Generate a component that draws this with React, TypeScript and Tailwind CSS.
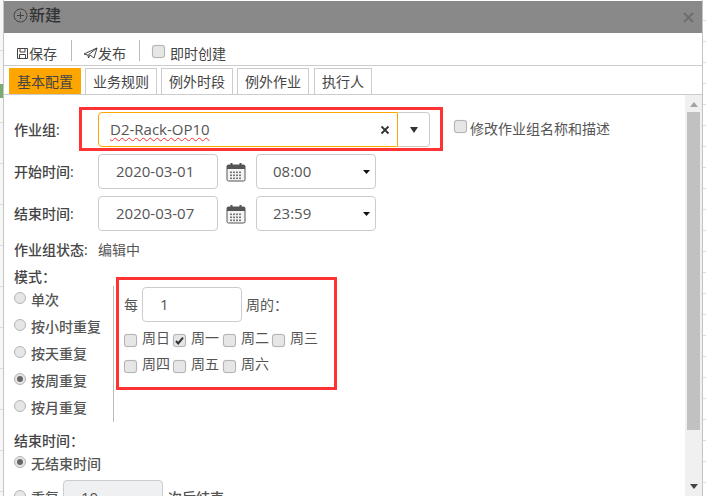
import React from "react";

const FONT = "font-['Open_Sans','Noto_Sans_CJK_SC',sans-serif]";

function Box({ checked }: { checked?: boolean }) {
  return (
    <span className="w-[13px] h-[13px] shrink-0 rounded-[3px] border border-[#b4b4b4] bg-[#e6e6e6] shadow-[0_0_1px_#ccc] flex items-center justify-center">
      {checked && (
        <svg width="9" height="9" viewBox="0 0 9 9">
          <path d="M1 5l2.200 2.400L8 1.600" fill="none" stroke="#333" strokeWidth="2" />
        </svg>
      )}
    </span>
  );
}

function Radio({ checked }: { checked?: boolean }) {
  return (
    <span className="w-[12px] h-[12px] -mt-[3px] shrink-0 rounded-full border border-[#b4b4b4] bg-[#e6e6e6] flex items-center justify-center">
      {checked && <span className="w-[6px] h-[6px] rounded-full bg-[#666]" />}
    </span>
  );
}

function Field({ w, children, className = "" }: { w: string; children: React.ReactNode; className?: string }) {
  return (
    <div className={`${w} h-[35px] shrink-0 border border-[#ccc] rounded-[4px] flex items-center text-[15px] text-[#555] ${className}`}>
      {children}
    </div>
  );
}

function Calendar() {
  return (
    <svg width="20" height="20" viewBox="0 0 20 20" className="shrink-0">
      <rect x="1" y="3" width="18" height="16" rx="1.500" fill="#f4f4f4" stroke="#555" strokeWidth="1" />
      <rect x="1" y="3" width="18" height="4" fill="#555" />
      <rect x="4.500" y="1" width="2" height="4" fill="#555" />
      <rect x="13.500" y="1" width="2" height="4" fill="#555" />
      {[4, 7, 10, 13].map((x) =>
        [9.5, 12.5, 15.5].map((y) => <rect key={`${x}-${y}`} x={x} y={y} width="2" height="1.600" fill="#777" />)
      )}
    </svg>
  );
}

function Caret({ big }: { big?: boolean }) {
  return big ? (
    <svg width="8" height="6" viewBox="0 0 8 6"><path d="M0 0h8L4 6z" fill="#333" /></svg>
  ) : (
    <svg width="7" height="4" viewBox="0 0 7 4"><path d="M0 0h7L3.500 4z" fill="#111" /></svg>
  );
}

function TimeRow({ label, date, time }: { label: string; date: string; time: string }) {
  return (
    <div className="flex items-center h-[35px] mb-[7px]">
      <span className="w-[84px] text-[14px] font-medium text-[#444]">{label}</span>
      <Field w="w-[120px]" className="pl-[17px]">{date}</Field>
      <span className="w-[38px] flex justify-center pr-[3px]"><Calendar /></span>
      <Field w="w-[120px]" className="pl-[16px] justify-between pr-[5px]">
        {time}
        <Caret />
      </Field>
    </div>
  );
}

function Mode({ label, checked }: { label: string; checked?: boolean }) {
  return (
    <div className="flex items-center gap-[5px] h-[27px] text-[14px] font-medium text-[#555]">
      <Radio checked={checked} />
      {label}
    </div>
  );
}

function Day({ label, checked, w }: { label: string; checked?: boolean; w: string }) {
  return (
    <div className={`flex items-center gap-[5px] ${w} text-[14px] text-[#555]`}>
      <span className="pt-[3px]"><Box checked={checked} /></span>
      <span className="-mt-[3px]">{label}</span>
    </div>
  );
}

export default function App() {
  return (
    <div className={`w-[706px] h-[496px] overflow-hidden bg-white flex ${FONT}`}>
      <div className="w-[3px] shrink-0 flex flex-col bg-[#f7f7f7]">
        <div className="h-[84px] shrink-0 bg-[linear-gradient(#f7f7f7_50px,#ddd_50px,#ddd_51px,#f7f7f7_51px)]" />
        <div className="h-[14px] shrink-0 bg-[#79ad6f]" />
        <div className="flex-1 bg-[repeating-linear-gradient(#f7f7f7_0,#f7f7f7_24px,#ddd_24px,#ddd_25px,#f7f7f7_25px,#f7f7f7_41px)]" />
      </div>
      <div className="w-[700px] shrink-0 h-full flex flex-col border-x border-[#c4c4c4]">
        <header className="h-[32px] shrink-0 mt-px bg-[#898989] flex items-center justify-between pl-[9px] pr-[8px] pb-[4px]">
          <div className="flex items-center text-[16px] font-medium text-[#333]">
            <svg width="15" height="15" viewBox="0 0 15 15" className="mr-px">
              <circle cx="7.500" cy="7.500" r="6.500" fill="none" stroke="#444" />
              <path d="M7.500 4v7M4 7.500h7" stroke="#444" />
            </svg>
            新建
          </div>
          <svg width="11" height="11" viewBox="0 0 11 11" className="mt-[4px]">
            <path d="M1 1l9 9M10 1l-9 9" stroke="#6e6e6e" strokeWidth="2" />
          </svg>
        </header>

        <div className="h-[33px] shrink-0 border-b border-[#ccc] flex items-center pl-[12px] text-[14px] text-[#444]">
          <span className="flex items-center pt-[9px]">
            <svg width="13" height="13" viewBox="0 0 13 13"><path d="M1.500 1.500h10v10h-10zM4 1.500v3.500h5v-3.500M3.500 11.500v-4h6v4" fill="none" stroke="#444" /></svg>
            保存
          </span>
          <span className="w-px h-[21px] mt-[3px] bg-[#bbb] ml-[14px] mr-[11px]" />
          <span className="flex items-center pt-[9px]">
            <svg width="15" height="13" viewBox="0 0 15 13"><path d="M1 7L14 1l-3 10-4-3-1.500 3L5 8.200zM5 8.200L14 1" fill="none" stroke="#444" /></svg>
            发布
          </span>
          <span className="w-px h-[21px] mt-[3px] bg-[#bbb] ml-[13px] mr-[12px]" />
          <span className="flex items-center gap-[5px] pt-[9px]">
            <span className="-mt-[4px]"><Box /></span>
            即时创建
          </span>
        </div>

        <nav className="h-[29px] shrink-0 border-b border-[#ccc] flex items-end pl-[5px] gap-[4px] text-[14px] text-[#444]">
          <span className="h-[26px] w-[72px] bg-[#ffa500] flex items-center justify-center">基本配置</span>
          {["业务规则", "例外时段", "例外作业"].map((t) => (
            <span key={t} className="h-[26px] w-[72px] border border-b-0 border-[#ccc] flex items-center justify-center">{t}</span>
          ))}
          <span className="h-[26px] w-[58px] ml-px border border-b-0 border-[#ccc] flex items-center justify-center">执行人</span>
        </nav>

        <div className="flex-1 flex min-h-0">
          <main className="flex-1 min-w-0 pl-[10px] pt-[17px] overflow-hidden">
            <div className="flex items-center h-[35px] mb-[7px]">
              <span className="w-[84px] text-[14px] font-medium text-[#444]">作业组:</span>
              <div className="relative flex w-[332px] h-[35px] shrink-0">
                <div className="flex-1 border border-[#ffa500] rounded-l-[4px] flex items-center justify-between pl-[11px] pr-[7px] text-[15px] text-[#555]">
                  <span className="underline decoration-wavy decoration-[#e33] decoration-1 underline-offset-2">D2-Rack-OP10</span>
                  <svg width="10" height="10" viewBox="0 0 10 10"><path d="M1.500 1.500l7 7M8.500 1.500l-7 7" stroke="#333" strokeWidth="1.800" /></svg>
                </div>
                <div className="w-[32px] border border-l-0 border-[#ccc] rounded-r-[4px] flex items-center justify-center"><Caret big /></div>
                <div className="absolute -left-[19px] -top-[5px] w-[364px] h-[44px] border-[3px] border-[#ff3333] pointer-events-none" />
              </div>
              <span className="ml-[24px] -mt-[3px] flex items-center gap-[3px] text-[14px] text-[#555]">
                <span className="-mt-[3px]"><Box /></span>
                修改作业组名称和描述
              </span>
            </div>

            <TimeRow label="开始时间:" date="2020-03-01" time="08:00" />
            <TimeRow label="结束时间:" date="2020-03-07" time="23:59" />

            <div className="flex items-center h-[20px] mt-[8px] text-[14px] text-[#555]">
              <span className="w-[84px] font-medium text-[#444]">作业组状态:</span>
              编辑中
            </div>

            <div className="mt-[9px] text-[14px] font-medium text-[#444] leading-[18px]">模式：</div>
            <div className="flex">
              <div className="w-[100px] h-[136px] border-r border-[#bbb]">
                <Mode label="单次" />
                <Mode label="按小时重复" />
                <Mode label="按天重复" />
                <Mode label="按周重复" checked />
                <Mode label="按月重复" />
              </div>
              <div className="relative ml-[10px] pt-[1px] text-[14px] text-[#555]">
                <div className="flex items-center h-[35px]">
                  <span className="w-[18px]">每</span>
                  <Field w="w-[100px]" className="pl-[17px]">1</Field>
                  <span className="ml-[4px]">周的：</span>
                </div>
                <div className="flex mt-[4px] h-[26px]">
                  <Day label="周日" w="w-[49px]" />
                  <Day label="周一" checked w="w-[50px]" />
                  <Day label="周二" w="w-[49px]" />
                  <Day label="周三" w="w-[50px]" />
                </div>
                <div className="flex h-[26px]">
                  <Day label="周四" w="w-[49px]" />
                  <Day label="周五" w="w-[50px]" />
                  <Day label="周六" w="w-[49px]" />
                </div>
                <div className="absolute -left-[8px] -top-[9px] w-[221px] h-[113px] border-[3px] border-[#ff3333] pointer-events-none" />
              </div>
            </div>

            <div className="mt-[10px] text-[14px] font-medium text-[#444] leading-[18px]">结束时间：</div>
            <Mode label="无结束时间" checked />
            <div className="flex items-center gap-[5px] h-[35px] mt-[3px] text-[14px] font-medium text-[#555] whitespace-nowrap">
              <Radio />
              <span className="w-[27px]">重复</span>
              <span className="w-[100px] h-[35px] shrink-0 border border-[#ccc] rounded-[4px] bg-[#eef0f1] pl-[17px] flex items-center font-normal text-[15px]">10</span>
              <span>次后结束</span>
            </div>
          </main>
          <aside className="w-[17px] shrink-0 bg-[#f0f0f0] flex flex-col items-center">
            <svg width="8" height="5" viewBox="0 0 8 5" className="mt-[7px] mb-[5px]"><path d="M4 0l4 5H0z" fill="#a3a3a3" /></svg>
            <div className="w-[13px] h-[318px] bg-[#c1c1c1]" />
            <svg width="8" height="5" viewBox="0 0 8 5" className="mt-auto mb-[7px]"><path d="M0 0h8L4 5z" fill="#444" /></svg>
          </aside>
        </div>
      </div>
      <div className="flex-1 bg-[repeating-linear-gradient(#fff_0,#fff_20px,#ddd_20px,#ddd_21px)]" />
    </div>
  );
}
